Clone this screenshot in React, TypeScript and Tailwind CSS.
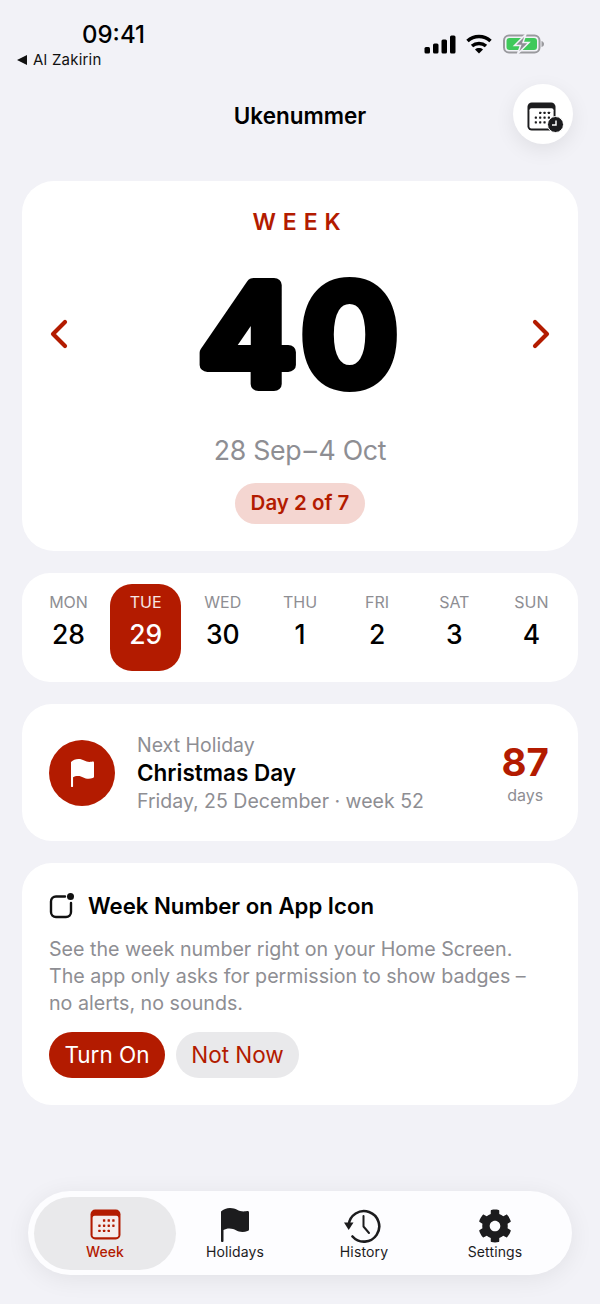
import React from "react";
import { FaCog } from "react-icons/fa";

function CalendarIcon({ color, size, inner = "white" }: { color: string; size: number; inner?: string }) {
  return (
    <svg width={size} height={size} viewBox="0 0 30 30" fill="none">
      <rect x="0.500" y="0.500" width="29" height="29" rx="4.500" fill={color} />
      <rect x="2.500" y="6.500" width="25" height="20.800" rx="2" fill={inner} />
      {[12.500, 17, 21.500].map((x) => <rect key={"a" + x} x={x} y="10" width="2.300" height="2.300" rx="0.500" fill={color} />)}
      {[8, 12.500, 17, 21.500].map((x) => <rect key={"b" + x} x={x} y="15" width="2.300" height="2.300" rx="0.500" fill={color} />)}
      {[8, 12.500, 17].map((x) => <rect key={"c" + x} x={x} y="20" width="2.300" height="2.300" rx="0.500" fill={color} />)}
    </svg>
  );
}

function FlagIcon({ color, className }: { color: string; className?: string }) {
  return (
    <svg className={className} viewBox="0 0 28 34" fill={color}>
      <path d="M0 3.500C2.500 1.200 5.500 0 9 0c6 0 8.500 3.500 13.500 3.500 2 0 3.500-.4 4.200-.4.800 0 1.300.6 1.300 1.500v16.600c0 1-.5 1.500-1.500 1.900-1.500.6-3.300.9-5 .9-5.300 0-7.700-3.500-13-3.500-2.400 0-4.500.6-6 1.600V33c0 .7-.5 1-1.200 1S0 33.700 0 33z" />
    </svg>
  );
}

function Chevron({ dir }: { dir: "l" | "r" }) {
  return (
    <svg width="20" height="30" viewBox="0 0 20 30" fill="none" stroke="#b31b00" strokeWidth="4.200" strokeLinecap="round" strokeLinejoin="round">
      <path d={dir === "l" ? "M16 3 4 15l12 12" : "M4 3l12 12L4 27"} />
    </svg>
  );
}

function Day({ name, num, active }: { name: string; num: string; active?: boolean }) {
  return (
    <div className={`w-[71px] h-[87px] rounded-[22px] flex flex-col items-center pt-[8px] ${active ? "bg-[#b31b00] text-white" : "text-black"}`}>
      <span className={`text-[16px] leading-[20px] ${active ? "text-white/90" : "text-[#8e8e93]"}`}>{name}</span>
      <span className="text-[26.500px] leading-[32px] mt-[6px] font-medium">{num}</span>
    </div>
  );
}

function Tab({ label, icon, active, width }: { label: string; icon: React.ReactNode; active?: boolean; width: string }) {
  return (
    <div className={`${width} h-[73px] rounded-[37px] flex flex-col items-center ${active ? "bg-[#e9e9eb] text-[#b31b00]" : "text-[#1c1c1e]"}`}>
      <div className="h-[34px] mt-[11px] flex items-center justify-center">{icon}</div>
      <span className={`text-[14px] leading-[18px] mt-[1px] tracking-[0.01em] ${active ? "font-medium" : "font-normal"}`}>{label}</span>
    </div>
  );
}

export default function App() {
  return (
    <div className="w-[600px] h-[1304px] bg-[#f2f2f7] flex flex-col overflow-hidden" style={{ fontFamily: "Inter, 'Noto Sans', sans-serif" }}>
      <div className="h-[84px] flex justify-between">
        <div className="pl-[17px] pt-[21px]">
          <div className="pl-[65px] text-[24px] leading-[28px] font-medium text-black">09:41</div>
          <div className="flex items-center gap-[6px] text-[15px] leading-[18px] mt-[2px] text-[#111] tracking-[0.015em]">
            <svg width="10" height="10" viewBox="0 0 10 10"><path d="M0 5 10 0v10z" fill="#111" /></svg>
            Al Zakirin
          </div>
        </div>
        <div className="flex items-start gap-[10px] pt-[34px] pr-[55px]">
          <svg width="32" height="20" viewBox="0 0 32 20" fill="#000">
            <rect x="0.500" y="13" width="5.500" height="6.500" rx="1.500" />
            <rect x="9" y="9.500" width="5.500" height="10" rx="1.500" />
            <rect x="17.500" y="5.500" width="5.500" height="14" rx="1.500" />
            <rect x="26" y="1.500" width="5.500" height="18" rx="1.500" />
          </svg>
          <svg width="26" height="20" viewBox="0 0 26 20" fill="none" stroke="#000" strokeWidth="3.500">
            <path d="M1.500 7C8 1 18 1 24.500 7" />
            <path d="M6 12C10 8.500 16 8.500 20 12" />
            <path d="M13 19.500 9 15.500c2.300-1.900 5.700-1.900 8 0z" fill="#000" stroke="none" />
          </svg>
          <svg width="42" height="20" viewBox="0 0 42 20" className="ml-[1px]">
            <rect x="1" y="1.500" width="35.500" height="17" rx="5" fill="none" stroke="#9a9a9e" strokeWidth="2" />
            <rect x="3.500" y="4" width="30.500" height="12" rx="3" fill="#3fc95a" />
            <path d="M38.500 7c1.700.5 2.500 1.500 2.500 3s-.8 2.500-2.500 3z" fill="#9a9a9e" />
            <path d="M23 0 11.500 11.500h6L14.500 20 26 8.500h-6z" fill="#8e8e93" stroke="#f2f2f7" strokeWidth="1.500" />
          </svg>
        </div>
      </div>

      <div className="relative h-[97px]">
        <div className="text-center text-[22.500px] leading-[28px] font-semibold text-black pt-[18px]">Ukenummer</div>
        <div className="absolute left-[513px] top-0 w-[60px] h-[60px] rounded-full bg-white flex items-center justify-center shadow-[0_6px_20px_rgba(0,0,0,0.08)]">
          <div className="relative w-[36px] h-[32px] -mt-[1px] translate-x-[2px] translate-y-[4px]">
            <CalendarIcon color="#1c1c1e" size={29} inner="white" />
            <div className="absolute left-[20px] top-[14px] w-[17px] h-[17px] rounded-full bg-[#1c1c1e] border border-white flex">
              <svg viewBox="0 0 15 15" className="w-full h-full"><path d="M8 3.500v4.500H4" stroke="#fff" strokeWidth="1.500" fill="none" /></svg>
            </div>
          </div>
        </div>
      </div>

      <div className="mx-[22px] flex flex-col gap-[22px]">
        <div className="h-[370px] rounded-[32px] bg-white flex flex-col items-center">
          <div className="mt-[27px] text-[23px] leading-[28px] font-semibold text-[#b31b00] tracking-[0.3em]">WEEK</div>
          <div className="w-full flex items-center justify-between px-[27px] mt-[24px] h-[148px]">
            <Chevron dir="l" />
            <svg width="220" height="148" viewBox="0 0 220 148" className="overflow-visible">
              <text transform="translate(111 123.500) scale(1.09 1)" textAnchor="middle" fontSize="136" fontWeight="500" letterSpacing="5" fill="#000" stroke="#000" strokeWidth="14" strokeLinejoin="round" strokeLinecap="round">40</text>
            </svg>
            <Chevron dir="r" />
          </div>
          <div className="mt-[25px] text-[26.700px] leading-[34px] text-[#8e8e93] tracking-[-0.01em]">28 Sep<span className="mx-[2px]">–</span>4 Oct</div>
          <div className="mt-[16px] h-[41px] w-[130px] rounded-[21px] bg-[#f4d6d1] flex items-center justify-center text-[20.500px] font-semibold text-[#b31b00]">Day 2 of 7</div>
        </div>

        <div className="h-[109px] rounded-[28px] bg-white flex items-start justify-between px-[11px] pt-[11px]">
          <Day name="MON" num="28" />
          <Day name="TUE" num="29" active />
          <Day name="WED" num="30" />
          <Day name="THU" num="1" />
          <Day name="FRI" num="2" />
          <Day name="SAT" num="3" />
          <Day name="SUN" num="4" />
        </div>

        <div className="h-[137px] rounded-[30px] bg-white flex items-center pl-[27px] pr-[29px]">
          <div className="w-[66px] h-[66px] rounded-full bg-[#b31b00] flex items-center justify-center">
            <FlagIcon color="#fff" className="w-[23px] h-[28px]" />
          </div>
          <div className="ml-[22px] flex-1 flex flex-col">
            <span className="text-[19.500px] leading-[26px] text-[#8e8e93]">Next Holiday</span>
            <span className="text-[22.500px] leading-[30px] font-semibold text-black">Christmas Day</span>
            <span className="text-[19.500px] leading-[26px] text-[#8e8e93]">Friday, 25 December · week 52</span>
          </div>
          <div className="flex flex-col items-center">
            <span className="text-[38.500px] leading-[42px] font-bold text-[#b31b00]">87</span>
            <span className="text-[16px] leading-[20px] mt-[2px] text-[#8e8e93]">days</span>
          </div>
        </div>

        <div className="h-[242px] rounded-[30px] bg-white px-[27px] pt-[28px]">
          <div className="flex items-center gap-[12px]">
            <svg width="27" height="28" viewBox="0 0 27 28" fill="none">
              <path d="M16 4.500H7a5 5 0 0 0-5 5V20a5 5 0 0 0 5 5h10a5 5 0 0 0 5-5v-9" stroke="#111" strokeWidth="2.400" strokeLinecap="round" />
              <circle cx="21.500" cy="4.500" r="3.500" fill="#111" />
            </svg>
            <span className="text-[22.200px] leading-[30px] font-semibold text-black">Week Number on App Icon</span>
          </div>
          <p className="mt-[15px] text-[19.650px] leading-[27px] text-[#8e8e93]">
            See the week number right on your Home Screen.<br />
            The app only asks for permission to show badges –<br />
            no alerts, no sounds.
          </p>
          <div className="mt-[15px] flex gap-[11px]">
            <div className="w-[116px] h-[46px] rounded-[24px] bg-[#b31b00] text-white text-[22.500px] flex items-center justify-center">Turn On</div>
            <div className="w-[123px] h-[46px] rounded-[24px] bg-[#e9e9eb] text-[#b31b00] text-[22.500px] flex items-center justify-center">Not Now</div>
          </div>
        </div>
      </div>

      <div className="mt-[86px] mx-[28px] h-[84px] rounded-[42px] bg-[#fdfdff] shadow-[0_4px_24px_rgba(0,0,0,0.07)] flex items-center pl-[6px]">
        <Tab width="w-[142px]" label="Week" active icon={<CalendarIcon color="#b31b00" size={31} inner="#f4eceb" />} />
        <Tab width="w-[118px]" label="Holidays" icon={<FlagIcon color="#1c1c1e" className="w-[28px] h-[34px]" />} />
        <Tab width="w-[140px]" label="History" icon={
          <svg width="38" height="36" viewBox="0 0 38 36" fill="none" stroke="#1c1c1e" strokeWidth="2.600" strokeLinecap="round" strokeLinejoin="round" className="-translate-x-[1px] translate-y-[1px]">
            <path d="M4.700 17A15.300 15.300 0 1 1 8.500 28.500" />
            <path d="M0 14.500 4.700 22 9.500 14.500z" fill="#1c1c1e" stroke="none" />
            <path d="M19.500 8V18.500L25 25" strokeWidth="2" />
          </svg>
        } />
        <Tab width="w-[122px]" label="Settings" icon={<FaCog size={34} color="#1c1c1e" className="translate-y-[1px]" />} />
      </div>
    </div>
  );
}
